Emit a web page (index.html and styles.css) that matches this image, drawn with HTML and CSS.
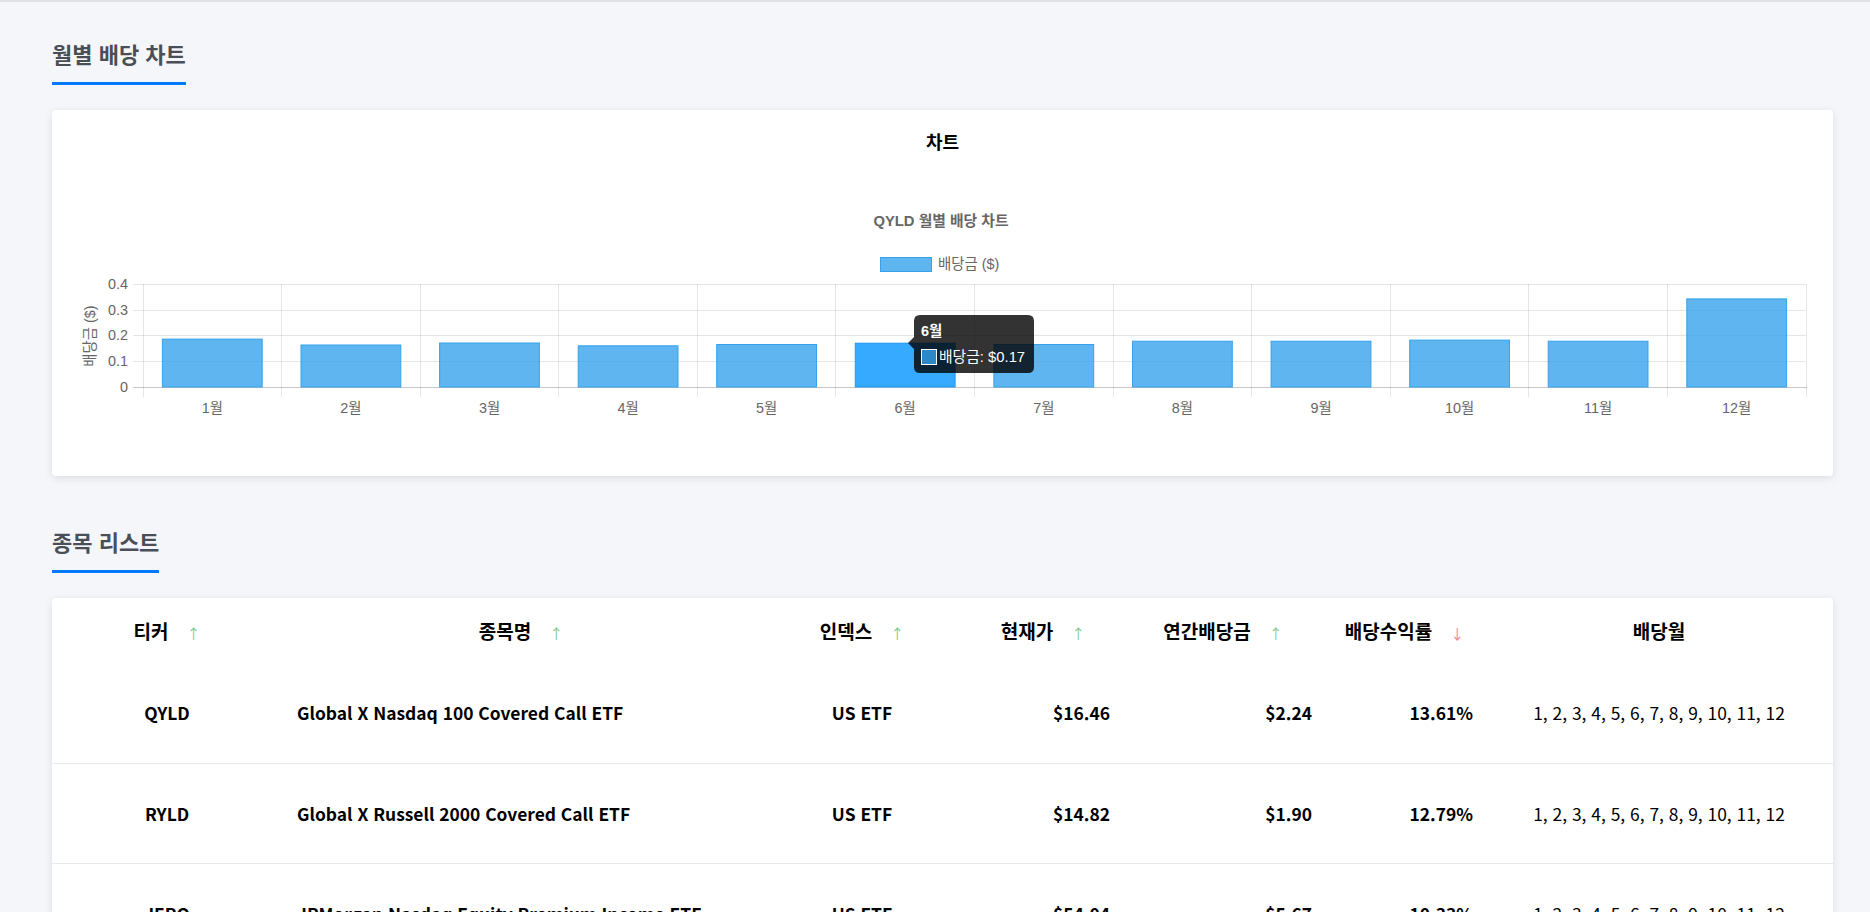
FILE: index.html
```html
<!DOCTYPE html>
<html lang="ko">
<head>
<meta charset="utf-8">
<title>월별 배당 차트</title>
<link rel="stylesheet" href="styles.css">
</head>
<body>
<div class="topbar"></div>
<main class="page">
  <section class="section">
    <div class="section-head"><h2 class="section-title">월별 배당 차트</h2></div>
    <div class="card chart-card">
      <h3 class="card-title">차트</h3>
      <svg class="chart" viewBox="0 0 1741 270" xmlns="http://www.w3.org/2000/svg">
        <text class="c-title" x="869" y="56" text-anchor="middle">QYLD 월별 배당 차트</text>
        <rect class="legend-box" x="808.5" y="87.5" width="51" height="14"/>
        <text class="c-label" x="866" y="99">배당금 ($)</text>

        <g class="grid">
          <line x1="61" x2="1734" y1="114.5" y2="114.5"/>
          <line x1="61" x2="1734" y1="140.5" y2="140.5"/>
          <line x1="61" x2="1734" y1="165.5" y2="165.5"/>
          <line x1="61" x2="1734" y1="191.5" y2="191.5"/>
          <line x1="71.5" x2="71.5" y1="114" y2="227"/>
          <line x1="209.5" x2="209.5" y1="114" y2="227"/>
          <line x1="348.5" x2="348.5" y1="114" y2="227"/>
          <line x1="486.5" x2="486.5" y1="114" y2="227"/>
          <line x1="625.5" x2="625.5" y1="114" y2="227"/>
          <line x1="763.5" x2="763.5" y1="114" y2="227"/>
          <line x1="902.5" x2="902.5" y1="114" y2="227"/>
          <line x1="1041.5" x2="1041.5" y1="114" y2="227"/>
          <line x1="1179.5" x2="1179.5" y1="114" y2="227"/>
          <line x1="1318.5" x2="1318.5" y1="114" y2="227"/>
          <line x1="1456.5" x2="1456.5" y1="114" y2="227"/>
          <line x1="1595.5" x2="1595.5" y1="114" y2="227"/>
          <line x1="1734.5" x2="1734.5" y1="114" y2="227"/>
        </g>
        <line class="zero-line" x1="61" x2="1735" y1="217.5" y2="217.5"/>

        <g class="c-label" text-anchor="end">
          <text x="56" y="119">0.4</text>
          <text x="56" y="145">0.3</text>
          <text x="56" y="170">0.2</text>
          <text x="56" y="196">0.1</text>
          <text x="56" y="222">0</text>
        </g>
        <text class="c-label" x="18" y="166" text-anchor="middle" dominant-baseline="central" transform="rotate(-90 18 166)">배당금 ($)</text>

        <g class="bars">
          <rect x="90.4" y="169.1" width="99.8" height="47.9"/>
          <rect x="229" y="175" width="99.8" height="42"/>
          <rect x="367.6" y="173" width="99.8" height="44"/>
          <rect x="506.2" y="175.8" width="99.8" height="41.2"/>
          <rect x="644.7" y="174.5" width="99.8" height="42.5"/>
          <rect class="bar-hover" x="783.3" y="173.2" width="99.8" height="43.8"/>
          <rect x="921.9" y="174.5" width="99.8" height="42.5"/>
          <rect x="1060.5" y="171.2" width="99.8" height="45.8"/>
          <rect x="1199.1" y="171.2" width="99.8" height="45.8"/>
          <rect x="1337.7" y="170.1" width="99.8" height="46.9"/>
          <rect x="1476.2" y="171.2" width="99.8" height="45.8"/>
          <rect x="1614.8" y="128.9" width="99.8" height="88.1"/>
        </g>

        <g class="c-label" text-anchor="middle">
          <text x="140.3" y="243">1월</text>
          <text x="278.9" y="243">2월</text>
          <text x="417.5" y="243">3월</text>
          <text x="556" y="243">4월</text>
          <text x="694.6" y="243">5월</text>
          <text x="833.2" y="243">6월</text>
          <text x="971.8" y="243">7월</text>
          <text x="1110.4" y="243">8월</text>
          <text x="1249" y="243">9월</text>
          <text x="1387.5" y="243">10월</text>
          <text x="1526.1" y="243">11월</text>
          <text x="1664.7" y="243">12월</text>
        </g>

        <g class="tooltip">
          <path class="tip-bg" d="M848 145 H956 Q962 145 962 151 V197 Q962 203 956 203 H848 Q842 203 842 197 V179 L836 173 L842 167 V151 Q842 145 848 145 Z"/>
          <text class="tip-title" x="849" y="166">6월</text>
          <rect class="tip-swatch" x="849.5" y="179.5" width="15" height="15"/>
          <text class="tip-body" x="867" y="192">배당금: $0.17</text>
        </g>
      </svg>
    </div>
  </section>

  <section class="section">
    <div class="section-head"><h2 class="section-title">종목 리스트</h2></div>
    <div class="card table-card">
      <table class="stock-table">
        <colgroup>
          <col class="col-ticker">
          <col class="col-name">
          <col class="col-index">
          <col class="col-price">
          <col class="col-annual">
          <col class="col-yield">
          <col class="col-months">
        </colgroup>
        <thead>
          <tr>
            <th>티커<span class="sort up">↑</span></th>
            <th>종목명<span class="sort up">↑</span></th>
            <th>인덱스<span class="sort up">↑</span></th>
            <th>현재가<span class="sort up">↑</span></th>
            <th>연간배당금<span class="sort up">↑</span></th>
            <th>배당수익률<span class="sort down">↓</span></th>
            <th>배당월</th>
          </tr>
        </thead>
        <tbody>
          <tr>
            <td class="t-center">QYLD</td>
            <td class="t-name">Global X Nasdaq 100 Covered Call ETF</td>
            <td class="t-center">US ETF</td>
            <td class="t-num">$16.46</td>
            <td class="t-num">$2.24</td>
            <td class="t-num">13.61%</td>
            <td class="t-months">1, 2, 3, 4, 5, 6, 7, 8, 9, 10, 11, 12</td>
          </tr>
          <tr>
            <td class="t-center">RYLD</td>
            <td class="t-name">Global X Russell 2000 Covered Call ETF</td>
            <td class="t-center">US ETF</td>
            <td class="t-num">$14.82</td>
            <td class="t-num">$1.90</td>
            <td class="t-num">12.79%</td>
            <td class="t-months">1, 2, 3, 4, 5, 6, 7, 8, 9, 10, 11, 12</td>
          </tr>
          <tr>
            <td class="t-center">JEPQ</td>
            <td class="t-name">JPMorgan Nasdaq Equity Premium Income ETF</td>
            <td class="t-center">US ETF</td>
            <td class="t-num">$54.04</td>
            <td class="t-num">$5.67</td>
            <td class="t-num">10.33%</td>
            <td class="t-months">1, 2, 3, 4, 5, 6, 7, 8, 9, 10, 11, 12</td>
          </tr>
        </tbody>
      </table>
    </div>
  </section>
</main>
</body>
</html>
```

FILE: styles.css
```css
* { box-sizing: border-box; }
html, body { margin: 0; }
body {
  background: #f5f6fa;
  font-family: "Noto Sans CJK KR", "Noto Sans", sans-serif;
  color: #000;
}
.topbar { height: 2px; background: #e1e1e3; }
.page {
  padding: 36px 37px 40px 52px;
  display: flex;
  flex-direction: column;
  gap: 50px;
}
.section-title {
  display: inline-block;
  margin: 0;
  font-size: 22px;
  line-height: 30px;
  font-weight: 700;
  color: #4a4f57;
  padding-bottom: 14px;
  border-bottom: 3px solid #007bff;
}
.card {
  margin-top: 25px;
  background: #fff;
  border-radius: 4px;
  box-shadow: 0 2px 8px rgba(0, 0, 0, 0.1);
}
.chart-card { padding: 18px 20px 36px; }
.card-title {
  margin: 0 0 16px;
  text-align: center;
  font-size: 18px;
  line-height: 26px;
  font-weight: 700;
}
.chart { display: block; width: 100%; height: 270px; }
.chart text { font-family: "Liberation Sans", "Noto Sans CJK KR", sans-serif; font-size: 14.4px; }
.c-title { font-weight: 700; fill: #666; font-size: 14.8px !important; }
.c-label { fill: #666; }
.legend-box { fill: rgba(54, 162, 235, 0.8); stroke: #36a2eb; stroke-width: 1; }
.grid line { stroke: rgba(0, 0, 0, 0.1); stroke-width: 1; }
.zero-line { stroke: rgba(0, 0, 0, 0.22); stroke-width: 1; }
.bars rect { fill: rgba(54, 162, 235, 0.8); stroke: #36a2eb; stroke-width: 1; }
.bars .bar-hover { fill: #36aaff; stroke: #2196f3; }
.tip-bg { fill: rgba(0, 0, 0, 0.8); }
.tip-title { fill: #fff; font-weight: 700; }
.tip-body { fill: #fff; font-size: 14.8px !important; }
.tip-swatch { fill: rgba(54, 162, 235, 0.8); stroke: #fff; stroke-width: 1; }

.stock-table {
  width: 100%;
  border-collapse: collapse;
  table-layout: fixed;
}
.col-ticker { width: 230px; }
.col-name { width: 478px; }
.col-index { width: 204px; }
.col-price { width: 158px; }
.col-annual { width: 202px; }
.col-yield { width: 161px; }
.col-months { width: 348px; }
.stock-table th {
  height: 65px;
  padding: 0;
  font-size: 19px;
  font-weight: 700;
  text-align: center;
  white-space: nowrap;
}
.sort { margin-left: 18px; font-size: 14px; font-weight: 400; }
.sort.up { color: #7eca8f; }
.sort.down { color: #ea868f; }
.stock-table td {
  height: 100px;
  padding: 0 12px;
  font-size: 17.4px;
  font-weight: 700;
  border-bottom: 1px solid #e9e9ec;
  white-space: nowrap;
}
.t-center { text-align: center; }
.t-name { text-align: left; padding-left: 15px !important; }
.t-num { text-align: right; }
.t-months { text-align: center; font-weight: 400 !important; }
```
